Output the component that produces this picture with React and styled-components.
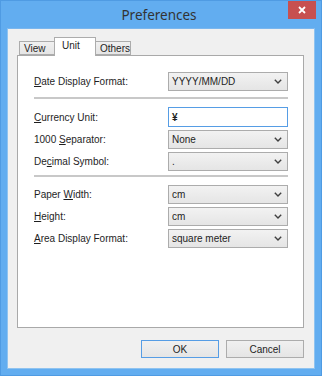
import React from 'react';
import styled, { createGlobalStyle } from 'styled-components';

const GlobalStyle = createGlobalStyle`
  html, body {
    margin: 0;
    padding: 0;
    background: #ffffff;
  }
  * {
    box-sizing: border-box;
  }
`;

const Chevron = () => (
  <svg width="8" height="5" viewBox="0 0 8 5">
    <polyline points="0.8,0.8 4,4 7.2,0.8" fill="none" stroke="#404040" strokeWidth="1.4" />
  </svg>
);

const CloseIcon = () => (
  <svg width="8" height="8" viewBox="0 0 8 8">
    <path d="M1 1 L7 7 M7 1 L1 7" stroke="#ffffff" strokeWidth="1.8" />
  </svg>
);

const Select = ({ value }) => (
  <SelectBox>
    <span>{value}</span>
    <Chevron />
  </SelectBox>
);

const Row = ({ label, children, gap }) => (
  <FieldRow $gap={gap}>
    <Label>{label}</Label>
    {children}
  </FieldRow>
);

const App = () => {
  return <>
    <GlobalStyle />
    <Window>
      <TitleBar>
        <span />
        <Title>Preferences</Title>
        <CloseButton><CloseIcon /></CloseButton>
      </TitleBar>
      <Client>
        <TabStrip>
          <Tab $width={36}>View</Tab>
          <Tab $width={42} $active>Unit</Tab>
          <Tab $width={36}>Others</Tab>
        </TabStrip>
        <Panel>
          <Row label={<><u>D</u>ate Display Format:</>} gap={0}>
            <Select value="YYYY/MM/DD" />
          </Row>
          <Separator $top={6} />
          <Row label={<><u>C</u>urrency Unit:</>} gap={8}>
            <TextInput>¥</TextInput>
          </Row>
          <Row label={<>1000 <u>S</u>eparator:</>} gap={3}>
            <Select value="None" />
          </Row>
          <Row label={<>De<u>c</u>imal Symbol:</>} gap={3}>
            <Select value="." />
          </Row>
          <Separator $top={4} />
          <Row label={<>Paper <u>W</u>idth:</>} gap={8}>
            <Select value="cm" />
          </Row>
          <Row label={<><u>H</u>eight:</>} gap={3}>
            <Select value="cm" />
          </Row>
          <Row label={<><u>A</u>rea Display Format:</>} gap={3}>
            <Select value="square meter" />
          </Row>
        </Panel>
        <ButtonRow>
          <Button $default>OK</Button>
          <Button>Cancel</Button>
        </ButtonRow>
      </Client>
    </Window>
  </>;
};

const Window = styled.div`
  width: 322px;
  height: 376px;
  background: #62adf0;
  border: 1px solid #4f9be3;
  display: flex;
  flex-direction: column;
  font-family: "Liberation Sans", Arial, sans-serif;
  color: #1e1e1e;
`;

const TitleBar = styled.div`
  height: 27px;
  display: grid;
  grid-template-columns: 1fr auto 1fr;
  align-items: start;
  padding-right: 5px;
`;

const Title = styled.div`
  font-family: "Noto Sans", "Open Sans", sans-serif;
  font-size: 13.5px;
  line-height: 28px;
  color: #333333;
  padding-left: 1px;
`;

const CloseButton = styled.div`
  justify-self: end;
  width: 28px;
  height: 18px;
  background: #c75050;
  display: flex;
  align-items: center;
  justify-content: center;
`;

const Client = styled.div`
  flex: 1;
  margin: 0 6px 6px 6px;
  background: #f0f0f0;
  border: 1px solid #8fc3f0;
  border-top-color: #7ab6ee;
  padding: 8px 10px 10px 9px;
  display: flex;
  flex-direction: column;
`;

const TabStrip = styled.div`
  height: 18px;
  display: flex;
  align-items: flex-end;
  padding-left: 2px;
  position: relative;
  z-index: 1;
`;

const Tab = styled.div`
  width: ${p => p.$width}px;
  height: ${p => (p.$active ? 19 : 14)}px;
  margin-left: -1px;
  margin-bottom: ${p => (p.$active ? -1 : 0)}px;
  background: ${p => (p.$active ? '#ffffff' : 'linear-gradient(#f0f0f0, #e5e5e5)')};
  border: 1px solid #acacac;
  border-bottom: ${p => (p.$active ? 'none' : '1px solid #acacac')};
  font-size: 10px;
  padding: ${p => (p.$active ? '2px 0 0 7px' : '1px 0 0 4px')};
  line-height: 11px;
  color: #1e1e1e;
  position: relative;
  z-index: ${p => (p.$active ? 2 : 1)};
  &:first-child {
    margin-left: 0;
  }
`;

const Panel = styled.div`
  height: 273px;
  background: #ffffff;
  border: 1px solid #a9a9a9;
  padding: 16px 15px 0 16px;
  display: flex;
  flex-direction: column;
`;

const FieldRow = styled.div`
  display: grid;
  grid-template-columns: 1fr 120px;
  align-items: center;
  margin-top: ${p => p.$gap}px;
`;

const Label = styled.div`
  font-size: 10px;
  color: #1e1e1e;
  u {
    text-decoration-thickness: 1px;
    text-underline-offset: 1px;
  }
`;

const SelectBox = styled.div`
  height: 19px;
  border: 1px solid #acacac;
  background: linear-gradient(#f2f2f2, #e5e5e5);
  display: flex;
  align-items: center;
  justify-content: space-between;
  padding: 0 5px 0 3px;
  font-size: 10px;
  color: #1e1e1e;
`;

const TextInput = styled.div`
  height: 20px;
  border: 1px solid #569de5;
  background: #ffffff;
  display: flex;
  align-items: center;
  padding: 0 3px;
  font-size: 10px;
  font-weight: bold;
  color: #1e1e1e;
`;

const Separator = styled.div`
  height: 2px;
  background: #c8c8c8;
  margin-top: ${p => p.$top}px;
`;

const ButtonRow = styled.div`
  display: flex;
  justify-content: flex-end;
  gap: 7px;
  margin-top: 12px;
`;

const Button = styled.div`
  width: 78px;
  height: 18px;
  border: 1px solid ${p => (p.$default ? '#569de5' : '#acacac')};
  background: linear-gradient(#f0f0f0, #e5e5e5);
  font-size: 10px;
  display: flex;
  align-items: center;
  justify-content: center;
  color: #1e1e1e;
`;

export default App;
